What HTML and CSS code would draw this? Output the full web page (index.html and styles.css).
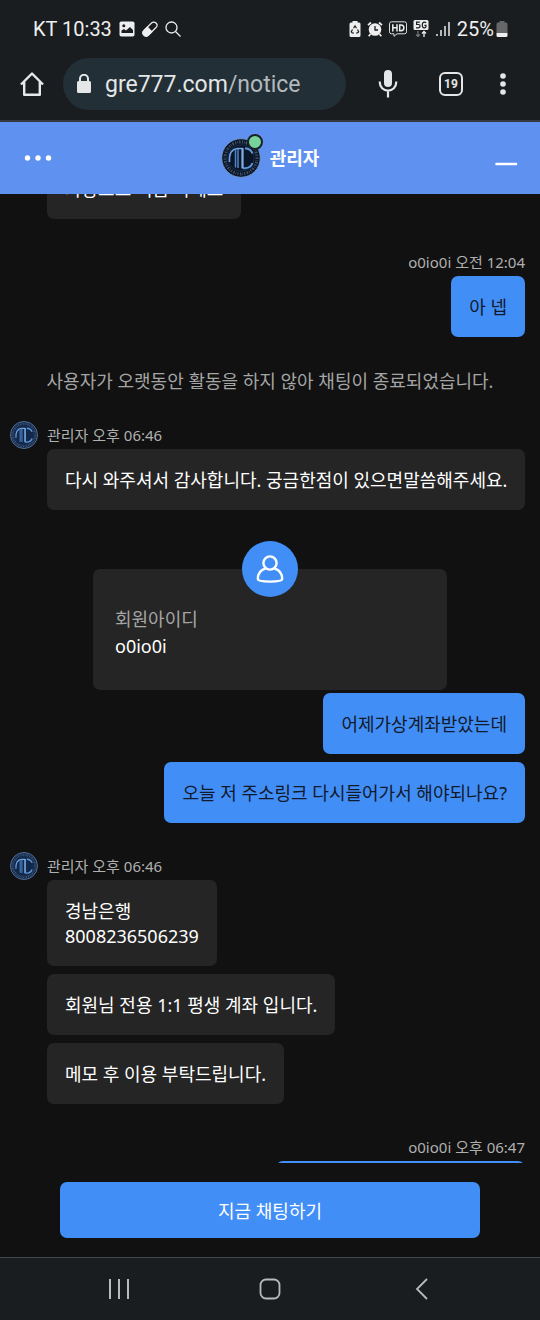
FILE: index.html
```html
<!DOCTYPE html>
<html lang="ko">
<head>
<meta charset="utf-8">
<meta name="viewport" content="width=device-width, initial-scale=1">
<title>관리자 채팅</title>
<link rel="stylesheet" href="styles.css">
</head>
<body>
<svg class="defs" aria-hidden="true">
  <symbol id="crest" viewBox="0 0 40 40">
    <circle cx="20" cy="20" r="19.300" fill="currentColor" stroke="#6f94c4" stroke-width="1"/>
    <circle cx="20" cy="20" r="16" fill="none" stroke="#8196b2" stroke-width="3" stroke-dasharray="1 1.300 .6 1.100 1.400 1.500" opacity=".5"/>
    <circle cx="20" cy="20" r="13.200" fill="currentColor" stroke="#1d3454" stroke-width=".8"/>
    <path d="M8.500 24c-.5-8 2-13 8-13.500h5" fill="none" stroke="#6fa3e2" stroke-width="1.600"/>
    <path d="M14.500 12v17.500M17 11v19" fill="none" stroke="#4f84c8" stroke-width="1.500"/>
    <path d="M21.500 10v20.500" fill="none" stroke="#7fb0ea" stroke-width="2.200"/>
    <path d="M31.500 15.500c-1.200-3.500-3.800-5-7.500-5.200M31.500 25c-1.200 3.500-3.800 5-7.500 5.200h-2" fill="none" stroke="#5f96da" stroke-width="2"/>
  </symbol>
</svg>
<div class="phone">
  <div class="status">
    <span>KT 10:33</span>
    <svg class="icon-left" width="16" height="16" viewBox="0 0 16 16"><rect x=".5" y=".5" width="15" height="15" rx="1.800" fill="#eee"/><circle cx="4.800" cy="4.800" r="1.500" fill="#1a1d1f"/><path d="M2.500 12V9.500l2.500-1.500 2 1.500 4-3.500 3 3V12z" fill="#1a1d1f"/></svg>
    <svg class="icon-left" width="16" height="16" viewBox="0 0 16 16"><g transform="rotate(45 8 8)"><rect x="4.800" y="-.5" width="6.400" height="17" rx="3.200" fill="none" stroke="#eee" stroke-width="1.200"/><path d="M4.200 8h7.600v5.500a3.800 3.800 0 0 1-7.600 0z" fill="#eee"/></g></svg>
    <svg class="icon-left" width="16" height="16" viewBox="0 0 16 16"><circle cx="6.500" cy="6.500" r="5.500" fill="none" stroke="#eee" stroke-width="1.300"/><path d="M10.500 10.500l5 5" stroke="#eee" stroke-width="1.300"/></svg>
    <div class="status-right">
      <svg width="12" height="16" viewBox="0 0 12 16"><path d="M3.500 1.500V0h5v1.500H10A1.500 1.500 0 0 1 11.500 3v11.500A1.500 1.500 0 0 1 10 16H2a1.500 1.500 0 0 1-1.500-1.500V3A1.500 1.500 0 0 1 2 1.500z" fill="#eee"/><path d="M4.500 7.200L6 4.800l1.500 2.400M8.500 8.500l1.200 2.300-1.200 1.200H7M5 12H3.200l-.9-1.300L3.500 8.500" fill="none" stroke="#1a1d1f" stroke-width="1.200"/></svg>
      <svg width="16" height="16" viewBox="0 0 16 16"><circle cx="8" cy="8.500" r="6.300" fill="#eee"/><path d="M1 4.200L4 1.500M15 4.200l-3-2.700M3.500 13l-1.800 2.200M12.500 13l1.800 2.200" stroke="#eee" stroke-width="1.700"/><path d="M8 5v4h3" fill="none" stroke="#1a1d1f" stroke-width="1.300"/></svg>
      <svg width="18" height="16" viewBox="0 0 18 16"><path d="M2.500 .8h13a2 2 0 0 1 2 2v8a2 2 0 0 1-2 2H8L5 15.300v-2.500H2.500a2 2 0 0 1-2-2v-8a2 2 0 0 1 2-2z" fill="none" stroke="#ddd"/><path d="M3.800 3.200v7.200M8 3.200v7.200M3.800 6.800H8M10.700 3.900h1.300a2.900 2.900 0 0 1 0 5.800h-1.300z" fill="none" stroke="#eee" stroke-width="1.500"/></svg>
      <svg width="16" height="18" viewBox="0 0 16 18"><rect x=".5" width="15" height="10" rx="1.500" fill="#eee"/><path d="M6.800 2.200H3.600v2.300h1.800q1.700 0 1.700 1.600T5.400 7.800H3M13 3q-.5-.9-1.700-.9-2 0-2 2.900t2 2.800q1.700 0 1.700-1.400V5.300h-1.600" fill="none" stroke="#1a1d1f" stroke-width="1.200"/><path d="M5 11v5.500M3 14.500l2 2 2-2" fill="none" stroke="#777" stroke-width="1.200"/><path d="M11 17v-5.500M9 13.500l2-2 2 2" fill="none" stroke="#eee" stroke-width="1.300"/></svg>
      <svg width="16" height="16" viewBox="0 0 16 16"><path d="M2 13v2M6 9v6M10 5v10M14 1v14" stroke="#ddd" stroke-width="1.600"/></svg>
      <span class="battery-level"><span>25%</span>
      <svg width="12" height="16" viewBox="0 0 12 16"><path d="M3.500 1.500V0h5v1.500H10A1.500 1.500 0 0 1 11.500 3v9H.5V3A1.500 1.500 0 0 1 2 1.500z" fill="#656769"/><path d="M.5 12h11v2.500A1.500 1.500 0 0 1 10 16H2a1.500 1.500 0 0 1-1.500-1.500z" fill="#eee"/></svg></span>
    </div>
  </div>

  <div class="toolbar">
    <button class="tool" aria-label="홈"><svg width="24" height="24" viewBox="0 0 24 24"><path d="M1 12.500L12 1.500l11 11M4.200 10v12.700h15.600V10" fill="none" stroke="#e8e8ea" stroke-width="2.400" stroke-linejoin="round"/></svg></button>
    <a class="address" href="#notice">
      <svg width="16" height="20" viewBox="0 0 16 20"><rect x="1" y="7" width="14" height="12" rx="1.500" fill="#e4e6e8"/><path d="M4 8V4.800a4 4 0 0 1 8 0V8" fill="none" stroke="#e4e6e8" stroke-width="2"/></svg>
      <span class="url">gre777.com<span class="url-path">/notice</span></span>
    </a>
    <button class="tool" aria-label="음성 검색"><svg width="24" height="28" viewBox="0 0 24 28"><rect x="8" y="0" width="8" height="17" rx="4" fill="#e4e6e8"/><path d="M3.800 11.500v1a8.200 8.200 0 0 0 16.400 0v-1M12 21v6.500" fill="none" stroke="#e4e6e8" stroke-width="2.200"/></svg></button>
    <button class="tool tabs" aria-label="탭 19개">19</button>
    <button class="tool more" aria-label="더보기"><svg width="24" height="24" viewBox="0 0 24 24" fill="#e4e6e8"><circle cx="12" cy="4" r="2.800"/><circle cx="12" cy="12" r="2.800"/><circle cx="12" cy="20" r="2.800"/></svg></button>
  </div>

  <header class="chat-header">
    <button class="tool" aria-label="메뉴"><svg width="28" height="8" viewBox="0 0 28 8" fill="#fff"><circle cx="3.500" cy="4" r="2.700"/><circle cx="14" cy="4" r="2.700"/><circle cx="24.500" cy="4" r="2.700"/></svg></button>
    <div class="agent">
      <span class="agent-avatar"><svg width="40" height="40"><use href="#crest"/></svg><span class="online"></span></span>
      <h1>관리자</h1>
    </div>
    <button class="tool minimize" aria-label="최소화"><svg width="30" height="16" viewBox="0 0 30 16"><path d="M8.500 14h19.500" stroke="#fff" stroke-width="2.600" stroke-linecap="round"/></svg></button>
  </header>

  <main class="thread" id="notice">
    <section class="group">
      <p class="bubble">가상으로 지금 하세요</p>
    </section>
    <section class="group mine">
      <div class="meta">o0io0i 오전 12:04</div>
      <p class="bubble">아 넵</p>
    </section>
    <p class="notice">사용자가 오랫동안 활동을 하지 않아 채팅이 종료되었습니다.</p>
    <section class="group">
      <div class="meta"><svg class="avatar" width="28" height="28"><use href="#crest"/></svg>관리자 오후 06:46</div>
      <p class="bubble">다시 와주셔서 감사합니다. 궁금한점이 있으면말씀해주세요.</p>
    </section>
    <section class="card">
      <span class="card-icon"><svg width="28" height="28" viewBox="0 0 28 28" fill="none" stroke="#fff" stroke-width="2.400"><circle cx="14" cy="8" r="6.600"/><path d="M9.500 13.500C4.500 15 1.800 18.500 1.800 24q0 2.600 12.200 2.600T26.200 24c0-5.500-2.700-9-7.700-10.500"/></svg></span>
      <dl>
        <dt>회원아이디</dt>
        <dd>o0io0i</dd>
      </dl>
    </section>
    <section class="group mine follow">
      <p class="bubble">어제가상계좌받았는데</p>
      <p class="bubble">오늘 저 주소링크 다시들어가서 해야되나요?</p>
    </section>
    <section class="group">
      <div class="meta"><svg class="avatar" width="28" height="28"><use href="#crest"/></svg>관리자 오후 06:46</div>
      <p class="bubble">경남은행<br>8008236506239</p>
      <p class="bubble">회원님 전용 1:1 평생 계좌 입니다.</p>
      <p class="bubble">메모 후 이용 부탁드립니다.</p>
    </section>
    <section class="group mine">
      <div class="meta">o0io0i 오후 06:47</div>
      <p class="bubble next"></p>
    </section>
  </main>

  <footer class="chat-footer"><button class="start">지금 채팅하기</button></footer>

  <nav class="system-nav">
    <button class="tool" aria-label="최근 앱"><svg width="22" height="22" viewBox="0 0 22 22"><path d="M2 1v20M11 1v20M20 1v20" stroke="#b9babc" stroke-width="2"/></svg></button>
    <button class="tool" aria-label="홈 화면"><svg width="22" height="22" viewBox="0 0 22 22"><rect x="1.500" y="1.500" width="19" height="19" rx="5.500" fill="none" stroke="#b9babc" stroke-width="1.800"/></svg></button>
    <button class="tool" aria-label="뒤로"><svg width="22" height="22" viewBox="0 0 22 22"><path d="M17 1L7 11l10 10" fill="none" stroke="#b9babc" stroke-width="1.800"/></svg></button>
  </nav>
</div>
</body>
</html>
```

FILE: styles.css
```css
* {
  box-sizing: border-box;
}

body {
  margin: 0;
  background: #111;
  color: #fff;
  font: 18px/25px "Noto Sans", "Noto Sans CJK KR", sans-serif;
}

h1, p, dl, dd {
  margin: 0;
}

svg {
  display: block;
  flex: none;
}

.defs {
  position: absolute;
  width: 0;
  height: 0;
}

.phone {
  display: flex;
  flex-direction: column;
  height: 100vh;
}

.tool {
  display: flex;
  align-items: center;
  justify-content: center;
  padding: 0;
  border: 0;
  background: none;
  color: #e4e6e8;
}

.status {
  display: flex;
  flex: none;
  align-items: center;
  height: 58px;
  padding: 0 32px 0 33px;
  background: #1a1d1f;
  color: #eee;
  font-family: Roboto, sans-serif;
  font-size: 20px;
}

.icon-left {
  margin-left: 7px;
}

.status-right {
  display: flex;
  align-items: center;
  gap: 6px;
  margin-left: auto;
}

.battery-level {
  display: flex;
  align-items: center;
  gap: 2px;
}

.toolbar {
  display: flex;
  flex: none;
  align-items: flex-start;
  height: 64px;
  padding: 0 25px 0 20px;
  border-bottom: 2px solid #373b3f;
  background: #1a1d1f;
}

.toolbar .tool {
  width: 24px;
  height: 52px;
}

.address {
  display: flex;
  flex: 1;
  align-items: center;
  gap: 13px;
  min-width: 0;
  height: 52px;
  margin: 0 30px 0 19px;
  padding: 0 13px;
  border-radius: 26px;
  background: #232f36;
  color: #e4e6e8;
  font-family: Roboto, sans-serif;
  font-size: 23px;
  text-decoration: none;
}

.url {
  overflow: hidden;
  padding-top: 2px;
  white-space: nowrap;
  line-height: 32px;
}

.url-path {
  color: #b3babf;
}

.toolbar .tabs {
  height: 24px;
  margin: 14px 28px 0 39px;
  border: 2px solid #e4e6e8;
  border-radius: 6px;
  font: bold 12px/20px Roboto, sans-serif;
}

.chat-header {
  display: flex;
  flex: none;
  align-items: center;
  justify-content: space-between;
  height: 72px;
  padding: 0 22px 0 24px;
  background: #5f91f1;
}

.agent {
  display: flex;
  align-items: center;
  gap: 9px;
}

.agent-avatar {
  position: relative;
  color: #0a1628;
}

.online {
  position: absolute;
  top: -4px;
  right: -2px;
  width: 16px;
  height: 16px;
  border: 2px solid #1b2228;
  border-radius: 50%;
  background: #76d39b;
}

.agent h1 {
  font-size: 18px;
  font-weight: bold;
}

.thread {
  display: flex;
  flex: 1;
  flex-direction: column;
  gap: 30px;
  min-height: 0;
  overflow: hidden;
}

/* The list is scrolled part of the way past its first message. */
.thread > :first-child {
  margin-top: -36px;
}

.thread > * {
  flex: none;
}

.group {
  display: flex;
  flex-direction: column;
  align-items: flex-start;
  gap: 8px;
  padding: 0 8px 0 47px;
}

.mine {
  align-items: flex-end;
  padding-right: 15px;
}

.bubble {
  padding: 19px 18px 17px;
  border-radius: 7px;
  background: #252525;
}

.mine .bubble {
  background: #428ef7;
  color: #111a2b;
}

.next {
  width: 52%;
  min-height: 61px;
}

.meta {
  display: flex;
  align-items: center;
  height: 27px;
  margin-bottom: -8px;
  color: #b0b0b0;
  font-size: 15px;
}

.avatar {
  margin: 0 9px 2px -37px;
  color: #12284a;
}

.notice {
  margin: 2px 0 -2px;
  color: #a5a5a5;
  text-align: center;
}

.card {
  position: relative;
  margin: 29px 93px 0;
  padding: 37px 22px 30px;
  border-radius: 7px;
  background: #252525;
  line-height: 27px;
}

.card-icon {
  position: absolute;
  top: -28px;
  left: 50%;
  display: flex;
  align-items: center;
  justify-content: center;
  width: 56px;
  height: 56px;
  margin-left: -28px;
  border-radius: 50%;
  background: #428ef7;
}

.card dt {
  color: #a5a5a5;
}

.follow {
  margin-top: -27px;
}

.chat-footer {
  display: flex;
  flex: none;
  justify-content: center;
  padding: 19px 60px;
}

.start {
  flex: 1;
  height: 56px;
  padding: 2px 0 0;
  border: 0;
  border-radius: 7px;
  background: #428ef7;
  color: #fff;
  font: inherit;
}

.system-nav {
  display: flex;
  flex: none;
  height: 63px;
  padding: 0 43px;
  border-top: 1px solid #43484c;
  background: #1a1d1f;
}

.system-nav .tool {
  flex: 1;
}
```
